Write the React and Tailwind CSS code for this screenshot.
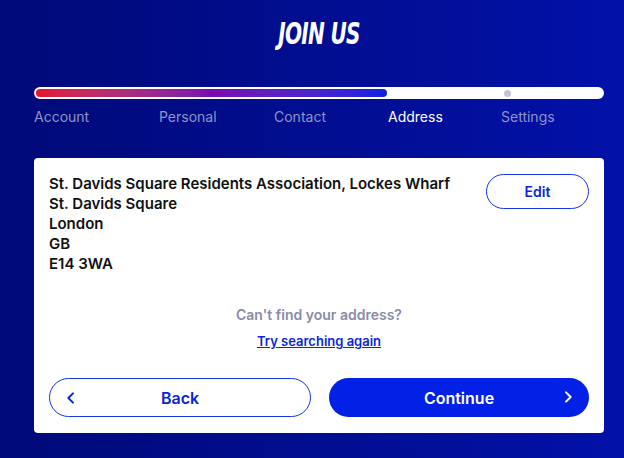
import React from "react";

const steps = ["Account", "Personal", "Contact", "Address", "Settings"];

function Chevron({ dir = "right", className = "" }) {
  return (
    <svg viewBox="0 0 24 24" className={className} fill="none" stroke="currentColor" strokeWidth="3" strokeLinecap="round" strokeLinejoin="round">
      {dir === "right" ? <path d="M9 5l7 7-7 7" /> : <path d="M15 5l-7 7 7 7" />}
    </svg>
  );
}

export default function App() {
  return (
    <div className="w-[624px] h-[458px] bg-gradient-to-r from-[#000a78] to-[#0211a8] font-['Inter','Liberation_Sans',sans-serif] overflow-hidden">
      <div className="pl-[34px] pr-[20px] pt-[17px]">
        <h1 className="text-center text-white text-[31px] leading-[32px] font-bold italic font-['DejaVu_Sans_Condensed','DejaVu_Sans',sans-serif] tracking-[-1px] scale-x-[0.72]">
          JOIN US
        </h1>

        <div className="mt-[38px] h-[12px] rounded-full bg-white p-[2px] relative">
          <div className="h-full w-[351px] rounded-full bg-gradient-to-r from-[#e5132d] via-[#7a08b0] to-[#0522e2]" />
          <div className="absolute left-[470px] top-[3px] w-[7px] h-[7px] rounded-full bg-[#c4c4d6]" />
        </div>

        <div className="grid grid-cols-[125px_115px_114px_113px_1fr] mt-[9px] text-[14px] leading-[18px]">
          {steps.map((s) => (
            <span key={s} className={s === "Address" ? "text-white" : "text-[#8f93c8]"}>
              {s}
            </span>
          ))}
        </div>

        <div className="mt-[32px] bg-white rounded-[4px] px-[15px] pt-[16px] pb-[16px]">
          <div className="flex justify-between items-start">
            <div className="text-[15px] leading-[20px] font-semibold text-[#111111]">
              <div>St. Davids Square Residents Association, Lockes Wharf</div>
              <div>St. Davids Square</div>
              <div>London</div>
              <div>GB</div>
              <div>E14 3WA</div>
            </div>
            <button className="w-[103px] h-[35px] rounded-full border border-[#1434e6] text-[#0a26d8] text-[14px] font-semibold">
              Edit
            </button>
          </div>

          <div className="mt-[32px] text-center text-[14px] leading-[18px] font-semibold text-[#8a8ca8]">
            Can't find your address?
          </div>
          <div className="mt-[4px] text-center">
            <a className="text-[13px] leading-[18px] font-semibold text-[#0a26d8] underline">Try searching again</a>
          </div>

          <div className="mt-[26px] flex gap-[18px]">
            <button className="relative flex-1 h-[39px] rounded-full border border-[#1434e6] text-[#0a26d8] text-[16px] font-semibold">
              <Chevron dir="left" className="absolute left-[13px] top-[11px] w-[16px] h-[16px]" />
              Back
            </button>
            <button className="relative flex-1 h-[39px] rounded-full bg-[#0320e6] text-white text-[16px] font-semibold">
              Continue
              <Chevron dir="right" className="absolute right-[13px] top-[11px] w-[16px] h-[16px]" />
            </button>
          </div>
        </div>
      </div>
    </div>
  );
}
